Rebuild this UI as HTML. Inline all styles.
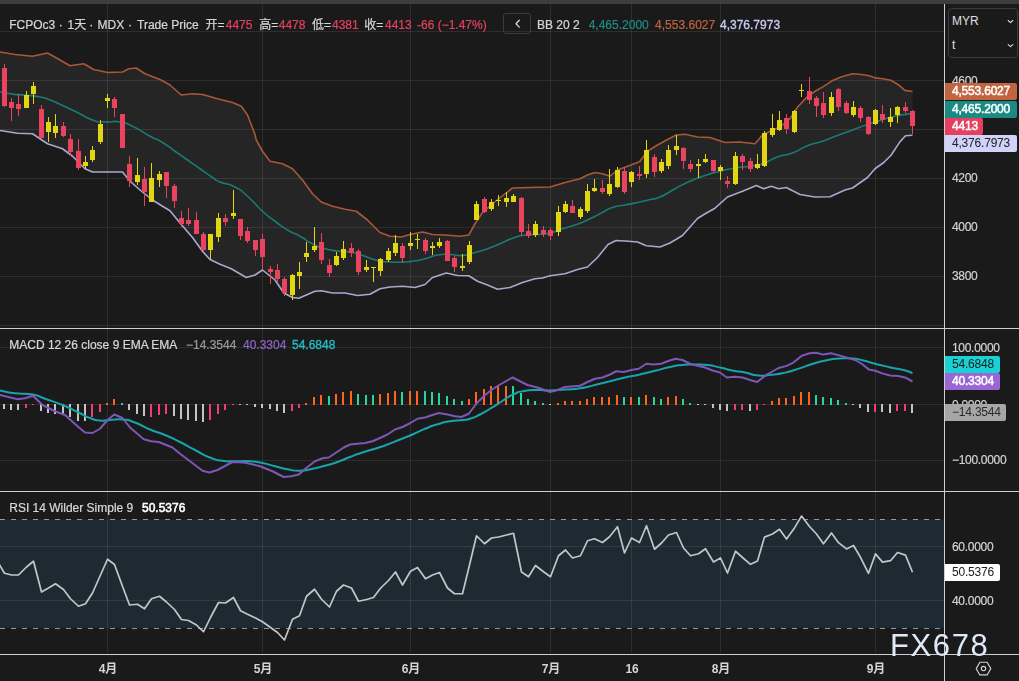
<!DOCTYPE html>
<html lang="zh"><head><meta charset="utf-8"><title>FCPOc3</title>
<style>
html,body{margin:0;padding:0;background:#1a1a1a;}
#root{position:relative;width:1019px;height:681px;overflow:hidden;background:#1a1a1a;font-family:"Liberation Sans","Noto Sans CJK SC",sans-serif;font-size:12px;line-height:14px;color:#d2d2d2;}
.t{position:absolute;white-space:nowrap;}
.leg{will-change:transform;-webkit-text-stroke:0.22px currentColor;color:#d6d6d6}
.leg span{position:absolute;top:0;white-space:nowrap;}
.red{color:#e5405e}
.ax{position:absolute;left:952px;letter-spacing:-0.3px;color:#d2d2d2;white-space:nowrap;will-change:transform;-webkit-text-stroke:0.2px currentColor;}
.box{position:absolute;left:945px;height:17px;line-height:17px;box-sizing:border-box;padding-left:7px;letter-spacing:-0.2px;white-space:nowrap;border-radius:0 2px 2px 0;will-change:transform;}
.tm{position:absolute;top:661.5px;will-change:transform;letter-spacing:-0.2px;width:40px;margin-left:-20px;text-align:center;font-weight:bold;color:#d6d6d6;white-space:nowrap;}
.sb{-webkit-text-stroke:0.35px currentColor;}
</style></head><body><div id="root">
<svg width="1019" height="681" viewBox="0 0 1019 681" style="position:absolute;left:0;top:0">
<rect x="0" y="0" width="1019" height="681" fill="#1a1a1a"/>
<rect x="0" y="0" width="1019" height="4" fill="#3d3d3d"/>
<polygon points="-3.00,51.50 0.00,52.00 15.00,54.50 32.50,56.25 47.50,53.00 60.00,60.00 70.00,65.75 83.75,63.75 93.75,69.50 107.50,72.50 122.50,72.00 128.75,68.75 136.25,68.00 145.00,73.75 160.00,79.50 170.00,85.00 181.25,95.00 192.50,93.75 202.50,94.50 217.50,98.75 232.50,102.50 241.25,106.25 247.50,115.00 254.75,133.75 256.25,140.00 262.50,151.25 270.00,161.25 282.50,163.75 292.50,168.75 302.50,180.00 312.50,193.75 321.25,202.00 332.50,206.25 345.00,209.25 356.25,211.25 367.50,220.00 380.00,232.50 390.00,236.25 401.25,237.00 410.00,234.50 422.50,232.00 432.50,234.50 445.00,235.00 460.00,236.25 468.75,235.00 475.00,223.75 482.50,212.50 492.50,203.75 505.00,193.75 512.50,188.00 530.00,187.50 550.00,187.00 565.00,182.50 580.00,178.75 587.50,175.00 595.00,172.50 602.50,173.75 610.00,176.25 617.50,170.00 627.50,166.25 637.50,162.50 640.00,161.25 647.50,151.25 657.50,145.00 667.50,139.50 676.25,135.00 685.00,134.25 697.50,137.00 710.00,137.50 725.00,142.50 740.00,142.00 755.00,143.75 762.50,135.00 770.00,131.25 780.00,127.00 790.00,118.75 797.70,107.00 806.60,97.40 815.50,91.00 823.20,86.60 832.10,80.80 841.00,77.00 852.50,73.80 861.40,74.50 869.10,75.70 875.50,77.90 883.10,78.70 890.80,80.20 898.40,84.70 904.80,90.40 912.50,91.50 912.50,135.20 905.50,135.80 899.90,141.90 891.25,155.00 883.75,162.50 875.00,168.75 867.50,177.50 852.50,188.00 845.00,190.00 830.00,196.75 815.00,197.00 800.00,194.50 786.25,187.50 778.75,188.75 771.25,186.25 763.75,188.75 756.25,185.50 742.50,191.25 727.50,197.00 715.00,208.20 706.00,213.30 697.50,218.50 690.00,227.00 682.50,235.50 670.00,243.00 660.00,247.00 646.25,245.75 637.50,242.00 625.00,241.00 616.00,240.50 608.00,244.50 597.50,257.50 587.50,267.00 577.50,269.50 565.00,273.75 550.00,275.75 542.50,278.00 535.00,278.75 522.50,282.50 510.00,287.50 497.50,289.25 487.50,285.00 477.50,281.25 468.75,275.75 457.50,275.50 446.25,273.00 432.50,277.50 425.00,284.50 415.00,287.50 402.50,286.25 390.00,287.00 380.00,288.75 370.00,294.25 357.50,295.50 345.00,293.00 332.50,293.00 321.25,290.75 315.00,291.25 307.50,294.50 298.75,298.25 292.50,297.50 283.75,293.00 275.00,280.00 262.50,270.00 255.00,275.00 246.25,277.50 231.25,268.75 220.00,264.25 210.00,259.50 202.50,251.25 192.50,237.50 180.00,223.00 170.00,210.75 162.50,206.25 152.50,200.00 140.00,190.00 130.00,181.25 122.50,172.00 107.50,172.00 92.50,172.00 85.00,168.75 72.50,156.25 62.50,148.75 47.50,143.75 32.50,133.75 17.50,133.25 0.00,130.50 -3.00,130.00" fill="#252525"/>
<rect x="0" y="519.5" width="944" height="108.5" fill="#1d2a31"/>
<g stroke="#ffffff" stroke-opacity="0.09" stroke-width="1" shape-rendering="crispEdges">
<line x1="107.5" y1="4" x2="107.5" y2="653"/>
<line x1="262.5" y1="4" x2="262.5" y2="653"/>
<line x1="410.5" y1="4" x2="410.5" y2="653"/>
<line x1="550.5" y1="4" x2="550.5" y2="653"/>
<line x1="631.5" y1="4" x2="631.5" y2="653"/>
<line x1="720.5" y1="4" x2="720.5" y2="653"/>
<line x1="875.5" y1="4" x2="875.5" y2="653"/>
<line x1="0" y1="31.5" x2="944" y2="31.5"/>
<line x1="0" y1="80.5" x2="944" y2="80.5"/>
<line x1="0" y1="129.5" x2="944" y2="129.5"/>
<line x1="0" y1="178.5" x2="944" y2="178.5"/>
<line x1="0" y1="227.5" x2="944" y2="227.5"/>
<line x1="0" y1="276.5" x2="944" y2="276.5"/>
<line x1="0" y1="325.5" x2="944" y2="325.5"/>
<line x1="0" y1="347.5" x2="944" y2="347.5"/>
<line x1="0" y1="404.5" x2="944" y2="404.5"/>
<line x1="0" y1="460.5" x2="944" y2="460.5"/>
<line x1="0" y1="546.5" x2="944" y2="546.5"/>
<line x1="0" y1="600.5" x2="944" y2="600.5"/>
</g>
<polyline points="-3.00,51.50 0.00,52.00 15.00,54.50 32.50,56.25 47.50,53.00 60.00,60.00 70.00,65.75 83.75,63.75 93.75,69.50 107.50,72.50 122.50,72.00 128.75,68.75 136.25,68.00 145.00,73.75 160.00,79.50 170.00,85.00 181.25,95.00 192.50,93.75 202.50,94.50 217.50,98.75 232.50,102.50 241.25,106.25 247.50,115.00 254.75,133.75 256.25,140.00 262.50,151.25 270.00,161.25 282.50,163.75 292.50,168.75 302.50,180.00 312.50,193.75 321.25,202.00 332.50,206.25 345.00,209.25 356.25,211.25 367.50,220.00 380.00,232.50 390.00,236.25 401.25,237.00 410.00,234.50 422.50,232.00 432.50,234.50 445.00,235.00 460.00,236.25 468.75,235.00 475.00,223.75 482.50,212.50 492.50,203.75 505.00,193.75 512.50,188.00 530.00,187.50 550.00,187.00 565.00,182.50 580.00,178.75 587.50,175.00 595.00,172.50 602.50,173.75 610.00,176.25 617.50,170.00 627.50,166.25 637.50,162.50 640.00,161.25 647.50,151.25 657.50,145.00 667.50,139.50 676.25,135.00 685.00,134.25 697.50,137.00 710.00,137.50 725.00,142.50 740.00,142.00 755.00,143.75 762.50,135.00 770.00,131.25 780.00,127.00 790.00,118.75 797.70,107.00 806.60,97.40 815.50,91.00 823.20,86.60 832.10,80.80 841.00,77.00 852.50,73.80 861.40,74.50 869.10,75.70 875.50,77.90 883.10,78.70 890.80,80.20 898.40,84.70 904.80,90.40 912.50,91.50" fill="none" stroke="#a85839" stroke-width="1.6" stroke-linejoin="round"/>
<polyline points="-3.00,130.00 0.00,130.50 17.50,133.25 32.50,133.75 47.50,143.75 62.50,148.75 72.50,156.25 85.00,168.75 92.50,172.00 107.50,172.00 122.50,172.00 130.00,181.25 140.00,190.00 152.50,200.00 162.50,206.25 170.00,210.75 180.00,223.00 192.50,237.50 202.50,251.25 210.00,259.50 220.00,264.25 231.25,268.75 246.25,277.50 255.00,275.00 262.50,270.00 275.00,280.00 283.75,293.00 292.50,297.50 298.75,298.25 307.50,294.50 315.00,291.25 321.25,290.75 332.50,293.00 345.00,293.00 357.50,295.50 370.00,294.25 380.00,288.75 390.00,287.00 402.50,286.25 415.00,287.50 425.00,284.50 432.50,277.50 446.25,273.00 457.50,275.50 468.75,275.75 477.50,281.25 487.50,285.00 497.50,289.25 510.00,287.50 522.50,282.50 535.00,278.75 542.50,278.00 550.00,275.75 565.00,273.75 577.50,269.50 587.50,267.00 597.50,257.50 608.00,244.50 616.00,240.50 625.00,241.00 637.50,242.00 646.25,245.75 660.00,247.00 670.00,243.00 682.50,235.50 690.00,227.00 697.50,218.50 706.00,213.30 715.00,208.20 727.50,197.00 742.50,191.25 756.25,185.50 763.75,188.75 771.25,186.25 778.75,188.75 786.25,187.50 800.00,194.50 815.00,197.00 830.00,196.75 845.00,190.00 852.50,188.00 867.50,177.50 875.00,168.75 883.75,162.50 891.25,155.00 899.90,141.90 905.50,135.80 912.50,135.20" fill="none" stroke="#a8a9cd" stroke-width="1.6" stroke-linejoin="round"/>
<path d="M-3.00,91.30 C-2.00,91.43 -5.17,90.77 0.00,91.70 C5.17,92.63 4.17,92.97 12.50,94.10 C20.83,95.23 15.83,94.13 25.00,95.10 C34.17,96.07 31.67,95.37 40.00,97.00 C48.33,98.63 42.50,97.17 50.00,100.00 C57.50,102.83 54.17,101.75 62.50,105.50 C70.83,109.25 65.00,106.42 75.00,111.25 C85.00,116.08 82.50,116.42 92.50,120.00 C102.50,123.58 95.83,121.33 105.00,122.00 C114.17,122.67 110.00,120.17 120.00,122.00 C130.00,123.83 125.00,122.75 135.00,127.50 C145.00,132.25 140.83,131.25 150.00,136.25 C159.17,141.25 154.17,137.50 162.50,142.50 C170.83,147.50 166.67,145.42 175.00,151.25 C183.33,157.08 179.17,154.17 187.50,160.00 C195.83,165.83 191.67,162.92 200.00,168.75 C208.33,174.58 205.83,173.08 212.50,177.50 C219.17,181.92 212.50,178.83 220.00,182.00 C227.50,185.17 225.83,182.25 235.00,187.00 C244.17,191.75 238.33,188.17 247.50,196.25 C256.67,204.33 253.33,202.92 262.50,211.25 C271.67,219.58 266.67,215.00 275.00,221.25 C283.33,227.50 279.17,225.00 287.50,230.00 C295.83,235.00 291.67,231.67 300.00,236.25 C308.33,240.83 304.17,239.58 312.50,243.75 C320.83,247.92 315.83,246.25 325.00,248.75 C334.17,251.25 330.83,250.00 340.00,251.25 C349.17,252.50 344.17,250.83 352.50,252.50 C360.83,254.17 356.67,253.58 365.00,256.25 C373.33,258.92 369.17,258.58 377.50,260.50 C385.83,262.42 381.67,261.50 390.00,262.00 C398.33,262.50 395.00,262.25 402.50,262.00 C410.00,261.75 405.00,262.33 412.50,261.25 C420.00,260.17 416.67,260.83 425.00,258.75 C433.33,256.67 429.17,256.42 437.50,255.00 C445.83,253.58 441.67,254.33 450.00,254.50 C458.33,254.67 454.17,256.17 462.50,255.50 C470.83,254.83 466.67,254.75 475.00,252.50 C483.33,250.25 479.17,251.67 487.50,248.75 C495.83,245.83 491.67,247.25 500.00,243.75 C508.33,240.25 504.17,241.17 512.50,238.25 C520.83,235.33 516.67,236.25 525.00,235.00 C533.33,233.75 529.17,235.17 537.50,234.50 C545.83,233.83 541.67,234.92 550.00,233.00 C558.33,231.08 554.17,231.42 562.50,228.75 C570.83,226.08 566.67,227.92 575.00,225.00 C583.33,222.08 579.17,223.75 587.50,220.00 C595.83,216.25 591.67,217.92 600.00,213.75 C608.33,209.58 604.17,210.42 612.50,207.50 C620.83,204.58 616.67,206.67 625.00,205.00 C633.33,203.33 629.17,204.33 637.50,202.50 C645.83,200.67 642.50,201.33 650.00,199.50 C657.50,197.67 651.67,200.58 660.00,197.00 C668.33,193.42 665.00,194.00 675.00,188.75 C685.00,183.50 680.00,185.67 690.00,181.25 C700.00,176.83 695.00,178.83 705.00,175.50 C715.00,172.17 710.00,173.75 720.00,171.25 C730.00,168.75 725.00,169.67 735.00,168.00 C745.00,166.33 740.83,167.67 750.00,166.25 C759.17,164.83 753.33,166.83 762.50,163.75 C771.67,160.67 767.50,160.58 777.50,157.00 C787.50,153.42 782.50,156.75 792.50,153.00 C802.50,149.25 797.50,149.67 807.50,145.75 C817.50,141.83 812.50,144.67 822.50,141.25 C832.50,137.83 827.50,139.25 837.50,135.50 C847.50,131.75 842.50,133.67 852.50,130.00 C862.50,126.33 858.33,127.67 867.50,124.50 C876.67,121.33 870.92,123.25 880.00,120.50 C889.08,117.75 883.92,118.58 894.75,116.25 C905.58,113.92 906.58,114.42 912.50,113.50" fill="none" stroke="#1b7a75" stroke-width="1.6" stroke-linejoin="round"/>
<g shape-rendering="crispEdges">
<rect x="4" y="64" width="1" height="43" fill="#ea4360"/>
<rect x="2" y="68" width="5" height="38" fill="#ea4360"/>
<rect x="11" y="98" width="1" height="23" fill="#ea4360"/>
<rect x="9" y="102" width="5" height="6" fill="#ea4360"/>
<rect x="18" y="94" width="1" height="22" fill="#ea4360"/>
<rect x="16" y="104" width="5" height="5" fill="#ea4360"/>
<rect x="26" y="91" width="1" height="17" fill="#e2d512"/>
<rect x="24" y="95" width="5" height="13" fill="#e2d512"/>
<rect x="33" y="82" width="1" height="22" fill="#e2d512"/>
<rect x="31" y="86" width="5" height="8" fill="#e2d512"/>
<rect x="41" y="105" width="1" height="33" fill="#ea4360"/>
<rect x="39" y="109" width="5" height="29" fill="#ea4360"/>
<rect x="48" y="117" width="1" height="25" fill="#e2d512"/>
<rect x="46" y="122" width="5" height="10" fill="#e2d512"/>
<rect x="55" y="114" width="1" height="24" fill="#e2d512"/>
<rect x="53" y="126" width="5" height="7" fill="#e2d512"/>
<rect x="63" y="122" width="1" height="15" fill="#ea4360"/>
<rect x="61" y="126" width="5" height="10" fill="#ea4360"/>
<rect x="70" y="134" width="1" height="22" fill="#ea4360"/>
<rect x="68" y="139" width="5" height="13" fill="#ea4360"/>
<rect x="78" y="139" width="1" height="31" fill="#ea4360"/>
<rect x="76" y="151" width="5" height="17" fill="#ea4360"/>
<rect x="85" y="156" width="1" height="13" fill="#e2d512"/>
<rect x="83" y="162" width="5" height="4" fill="#e2d512"/>
<rect x="92" y="146" width="1" height="16" fill="#e2d512"/>
<rect x="90" y="150" width="5" height="10" fill="#e2d512"/>
<rect x="100" y="120" width="1" height="24" fill="#e2d512"/>
<rect x="98" y="124" width="5" height="18" fill="#e2d512"/>
<rect x="107" y="94" width="1" height="14" fill="#e2d512"/>
<rect x="105" y="98" width="5" height="3" fill="#e2d512"/>
<rect x="114" y="97" width="1" height="20" fill="#ea4360"/>
<rect x="112" y="99" width="5" height="9" fill="#ea4360"/>
<rect x="122" y="114" width="1" height="34" fill="#ea4360"/>
<rect x="120" y="114" width="5" height="34" fill="#ea4360"/>
<rect x="129" y="156" width="1" height="31" fill="#ea4360"/>
<rect x="127" y="164" width="5" height="17" fill="#ea4360"/>
<rect x="137" y="158" width="1" height="27" fill="#e2d512"/>
<rect x="135" y="175" width="5" height="7" fill="#e2d512"/>
<rect x="144" y="167" width="1" height="39" fill="#ea4360"/>
<rect x="142" y="179" width="5" height="13" fill="#ea4360"/>
<rect x="151" y="163" width="1" height="39" fill="#e2d512"/>
<rect x="149" y="178" width="5" height="24" fill="#e2d512"/>
<rect x="159" y="171" width="1" height="16" fill="#e2d512"/>
<rect x="157" y="174" width="5" height="6" fill="#e2d512"/>
<rect x="166" y="172" width="1" height="26" fill="#ea4360"/>
<rect x="164" y="172" width="5" height="14" fill="#ea4360"/>
<rect x="174" y="184" width="1" height="24" fill="#ea4360"/>
<rect x="172" y="186" width="5" height="15" fill="#ea4360"/>
<rect x="181" y="211" width="1" height="16" fill="#ea4360"/>
<rect x="179" y="218" width="5" height="6" fill="#ea4360"/>
<rect x="188" y="208" width="1" height="18" fill="#ea4360"/>
<rect x="186" y="220" width="5" height="4" fill="#ea4360"/>
<rect x="196" y="212" width="1" height="22" fill="#ea4360"/>
<rect x="194" y="220" width="5" height="14" fill="#ea4360"/>
<rect x="203" y="232" width="1" height="19" fill="#ea4360"/>
<rect x="201" y="234" width="5" height="16" fill="#ea4360"/>
<rect x="210" y="234" width="1" height="25" fill="#e2d512"/>
<rect x="208" y="234" width="5" height="16" fill="#e2d512"/>
<rect x="218" y="213" width="1" height="29" fill="#e2d512"/>
<rect x="216" y="218" width="5" height="19" fill="#e2d512"/>
<rect x="225" y="214" width="1" height="12" fill="#ea4360"/>
<rect x="223" y="218" width="5" height="4" fill="#ea4360"/>
<rect x="233" y="190" width="1" height="29" fill="#e2d512"/>
<rect x="231" y="213" width="5" height="3" fill="#e2d512"/>
<rect x="240" y="219" width="1" height="21" fill="#ea4360"/>
<rect x="238" y="219" width="5" height="17" fill="#ea4360"/>
<rect x="247" y="227" width="1" height="16" fill="#ea4360"/>
<rect x="245" y="231" width="5" height="10" fill="#ea4360"/>
<rect x="255" y="240" width="1" height="16" fill="#ea4360"/>
<rect x="253" y="240" width="5" height="10" fill="#ea4360"/>
<rect x="262" y="234" width="1" height="35" fill="#ea4360"/>
<rect x="260" y="239" width="5" height="18" fill="#ea4360"/>
<rect x="270" y="266" width="1" height="18" fill="#ea4360"/>
<rect x="268" y="269" width="5" height="3" fill="#ea4360"/>
<rect x="277" y="264" width="1" height="18" fill="#ea4360"/>
<rect x="275" y="270" width="5" height="9" fill="#ea4360"/>
<rect x="284" y="277" width="1" height="19" fill="#ea4360"/>
<rect x="282" y="279" width="5" height="14" fill="#ea4360"/>
<rect x="292" y="274" width="1" height="26" fill="#e2d512"/>
<rect x="290" y="275" width="5" height="20" fill="#e2d512"/>
<rect x="299" y="262" width="1" height="27" fill="#e2d512"/>
<rect x="297" y="272" width="5" height="4" fill="#e2d512"/>
<rect x="306" y="242" width="1" height="20" fill="#e2d512"/>
<rect x="304" y="253" width="5" height="4" fill="#e2d512"/>
<rect x="314" y="227" width="1" height="25" fill="#e2d512"/>
<rect x="312" y="246" width="5" height="4" fill="#e2d512"/>
<rect x="321" y="233" width="1" height="31" fill="#ea4360"/>
<rect x="319" y="242" width="5" height="18" fill="#ea4360"/>
<rect x="329" y="259" width="1" height="18" fill="#ea4360"/>
<rect x="327" y="265" width="5" height="8" fill="#ea4360"/>
<rect x="336" y="252" width="1" height="14" fill="#e2d512"/>
<rect x="334" y="256" width="5" height="9" fill="#e2d512"/>
<rect x="343" y="241" width="1" height="19" fill="#e2d512"/>
<rect x="341" y="249" width="5" height="9" fill="#e2d512"/>
<rect x="351" y="243" width="1" height="14" fill="#ea4360"/>
<rect x="349" y="248" width="5" height="5" fill="#ea4360"/>
<rect x="358" y="249" width="1" height="26" fill="#ea4360"/>
<rect x="356" y="251" width="5" height="21" fill="#ea4360"/>
<rect x="366" y="260" width="1" height="12" fill="#e2d512"/>
<rect x="364" y="267" width="5" height="3" fill="#e2d512"/>
<rect x="373" y="267" width="1" height="15" fill="#e2d512"/>
<rect x="371" y="267" width="5" height="1" fill="#e2d512"/>
<rect x="380" y="258" width="1" height="18" fill="#e2d512"/>
<rect x="378" y="259" width="5" height="12" fill="#e2d512"/>
<rect x="388" y="248" width="1" height="14" fill="#e2d512"/>
<rect x="386" y="251" width="5" height="9" fill="#e2d512"/>
<rect x="395" y="235" width="1" height="21" fill="#e2d512"/>
<rect x="393" y="243" width="5" height="10" fill="#e2d512"/>
<rect x="402" y="243" width="1" height="20" fill="#ea4360"/>
<rect x="400" y="246" width="5" height="12" fill="#ea4360"/>
<rect x="410" y="232" width="1" height="18" fill="#e2d512"/>
<rect x="408" y="243" width="5" height="3" fill="#e2d512"/>
<rect x="417" y="234" width="1" height="15" fill="#e2d512"/>
<rect x="415" y="239" width="5" height="1" fill="#e2d512"/>
<rect x="425" y="238" width="1" height="16" fill="#ea4360"/>
<rect x="423" y="240" width="5" height="11" fill="#ea4360"/>
<rect x="432" y="242" width="1" height="13" fill="#e2d512"/>
<rect x="430" y="246" width="5" height="2" fill="#e2d512"/>
<rect x="439" y="238" width="1" height="10" fill="#e2d512"/>
<rect x="437" y="242" width="5" height="4" fill="#e2d512"/>
<rect x="447" y="240" width="1" height="21" fill="#ea4360"/>
<rect x="445" y="241" width="5" height="20" fill="#ea4360"/>
<rect x="454" y="256" width="1" height="16" fill="#ea4360"/>
<rect x="452" y="258" width="5" height="9" fill="#ea4360"/>
<rect x="462" y="254" width="1" height="17" fill="#e2d512"/>
<rect x="460" y="266" width="5" height="2" fill="#e2d512"/>
<rect x="469" y="241" width="1" height="23" fill="#e2d512"/>
<rect x="467" y="245" width="5" height="17" fill="#e2d512"/>
<rect x="476" y="201" width="1" height="19" fill="#e2d512"/>
<rect x="474" y="204" width="5" height="16" fill="#e2d512"/>
<rect x="484" y="197" width="1" height="16" fill="#ea4360"/>
<rect x="482" y="199" width="5" height="13" fill="#ea4360"/>
<rect x="491" y="199" width="1" height="12" fill="#e2d512"/>
<rect x="489" y="202" width="5" height="7" fill="#e2d512"/>
<rect x="498" y="195" width="1" height="11" fill="#e2d512"/>
<rect x="496" y="200" width="5" height="1" fill="#e2d512"/>
<rect x="506" y="192" width="1" height="15" fill="#e2d512"/>
<rect x="504" y="198" width="5" height="4" fill="#e2d512"/>
<rect x="513" y="194" width="1" height="8" fill="#e2d512"/>
<rect x="511" y="196" width="5" height="6" fill="#e2d512"/>
<rect x="521" y="197" width="1" height="39" fill="#ea4360"/>
<rect x="519" y="198" width="5" height="34" fill="#ea4360"/>
<rect x="528" y="224" width="1" height="14" fill="#ea4360"/>
<rect x="526" y="231" width="5" height="5" fill="#ea4360"/>
<rect x="535" y="221" width="1" height="16" fill="#e2d512"/>
<rect x="533" y="224" width="5" height="11" fill="#e2d512"/>
<rect x="543" y="226" width="1" height="11" fill="#ea4360"/>
<rect x="541" y="230" width="5" height="4" fill="#ea4360"/>
<rect x="550" y="228" width="1" height="12" fill="#ea4360"/>
<rect x="548" y="230" width="5" height="6" fill="#ea4360"/>
<rect x="558" y="206" width="1" height="30" fill="#e2d512"/>
<rect x="556" y="212" width="5" height="20" fill="#e2d512"/>
<rect x="565" y="201" width="1" height="12" fill="#e2d512"/>
<rect x="563" y="204" width="5" height="8" fill="#e2d512"/>
<rect x="572" y="200" width="1" height="13" fill="#ea4360"/>
<rect x="570" y="206" width="5" height="7" fill="#ea4360"/>
<rect x="580" y="207" width="1" height="12" fill="#e2d512"/>
<rect x="578" y="209" width="5" height="8" fill="#e2d512"/>
<rect x="587" y="184" width="1" height="29" fill="#e2d512"/>
<rect x="585" y="191" width="5" height="20" fill="#e2d512"/>
<rect x="594" y="179" width="1" height="13" fill="#e2d512"/>
<rect x="592" y="188" width="5" height="3" fill="#e2d512"/>
<rect x="602" y="180" width="1" height="14" fill="#ea4360"/>
<rect x="600" y="188" width="5" height="4" fill="#ea4360"/>
<rect x="609" y="169" width="1" height="27" fill="#e2d512"/>
<rect x="607" y="184" width="5" height="10" fill="#e2d512"/>
<rect x="617" y="167" width="1" height="21" fill="#e2d512"/>
<rect x="615" y="170" width="5" height="17" fill="#e2d512"/>
<rect x="624" y="168" width="1" height="26" fill="#ea4360"/>
<rect x="622" y="171" width="5" height="21" fill="#ea4360"/>
<rect x="631" y="171" width="1" height="16" fill="#e2d512"/>
<rect x="629" y="172" width="5" height="10" fill="#e2d512"/>
<rect x="639" y="166" width="1" height="14" fill="#ea4360"/>
<rect x="637" y="174" width="5" height="2" fill="#ea4360"/>
<rect x="646" y="140" width="1" height="38" fill="#e2d512"/>
<rect x="644" y="150" width="5" height="24" fill="#e2d512"/>
<rect x="654" y="154" width="1" height="23" fill="#ea4360"/>
<rect x="652" y="157" width="5" height="15" fill="#ea4360"/>
<rect x="661" y="159" width="1" height="14" fill="#e2d512"/>
<rect x="659" y="162" width="5" height="9" fill="#e2d512"/>
<rect x="668" y="145" width="1" height="24" fill="#e2d512"/>
<rect x="666" y="150" width="5" height="16" fill="#e2d512"/>
<rect x="676" y="135" width="1" height="20" fill="#e2d512"/>
<rect x="674" y="146" width="5" height="4" fill="#e2d512"/>
<rect x="683" y="147" width="1" height="22" fill="#ea4360"/>
<rect x="681" y="148" width="5" height="13" fill="#ea4360"/>
<rect x="690" y="160" width="1" height="12" fill="#ea4360"/>
<rect x="688" y="164" width="5" height="5" fill="#ea4360"/>
<rect x="698" y="159" width="1" height="19" fill="#e2d512"/>
<rect x="696" y="164" width="5" height="2" fill="#e2d512"/>
<rect x="705" y="154" width="1" height="9" fill="#e2d512"/>
<rect x="703" y="159" width="5" height="3" fill="#e2d512"/>
<rect x="713" y="160" width="1" height="12" fill="#ea4360"/>
<rect x="711" y="160" width="5" height="11" fill="#ea4360"/>
<rect x="720" y="165" width="1" height="15" fill="#e2d512"/>
<rect x="718" y="167" width="5" height="4" fill="#e2d512"/>
<rect x="727" y="176" width="1" height="12" fill="#ea4360"/>
<rect x="725" y="181" width="5" height="3" fill="#ea4360"/>
<rect x="735" y="152" width="1" height="33" fill="#e2d512"/>
<rect x="733" y="156" width="5" height="28" fill="#e2d512"/>
<rect x="742" y="154" width="1" height="16" fill="#ea4360"/>
<rect x="740" y="156" width="5" height="6" fill="#ea4360"/>
<rect x="750" y="158" width="1" height="14" fill="#ea4360"/>
<rect x="748" y="161" width="5" height="8" fill="#ea4360"/>
<rect x="757" y="154" width="1" height="15" fill="#e2d512"/>
<rect x="755" y="164" width="5" height="4" fill="#e2d512"/>
<rect x="764" y="131" width="1" height="36" fill="#e2d512"/>
<rect x="762" y="133" width="5" height="33" fill="#e2d512"/>
<rect x="772" y="114" width="1" height="23" fill="#e2d512"/>
<rect x="770" y="128" width="5" height="7" fill="#e2d512"/>
<rect x="779" y="111" width="1" height="20" fill="#e2d512"/>
<rect x="777" y="120" width="5" height="10" fill="#e2d512"/>
<rect x="786" y="114" width="1" height="20" fill="#ea4360"/>
<rect x="784" y="118" width="5" height="11" fill="#ea4360"/>
<rect x="794" y="110" width="1" height="23" fill="#e2d512"/>
<rect x="792" y="111" width="5" height="21" fill="#e2d512"/>
<rect x="801" y="84" width="1" height="13" fill="#e2d512"/>
<rect x="799" y="90" width="5" height="1" fill="#e2d512"/>
<rect x="809" y="77" width="1" height="27" fill="#ea4360"/>
<rect x="807" y="91" width="5" height="9" fill="#ea4360"/>
<rect x="816" y="96" width="1" height="21" fill="#ea4360"/>
<rect x="814" y="98" width="5" height="8" fill="#ea4360"/>
<rect x="823" y="92" width="1" height="26" fill="#ea4360"/>
<rect x="821" y="103" width="5" height="12" fill="#ea4360"/>
<rect x="831" y="92" width="1" height="24" fill="#e2d512"/>
<rect x="829" y="97" width="5" height="16" fill="#e2d512"/>
<rect x="838" y="88" width="1" height="23" fill="#ea4360"/>
<rect x="836" y="89" width="5" height="18" fill="#ea4360"/>
<rect x="846" y="101" width="1" height="13" fill="#ea4360"/>
<rect x="844" y="103" width="5" height="10" fill="#ea4360"/>
<rect x="853" y="101" width="1" height="16" fill="#e2d512"/>
<rect x="851" y="107" width="5" height="8" fill="#e2d512"/>
<rect x="860" y="106" width="1" height="16" fill="#ea4360"/>
<rect x="858" y="108" width="5" height="10" fill="#ea4360"/>
<rect x="868" y="116" width="1" height="19" fill="#ea4360"/>
<rect x="866" y="117" width="5" height="17" fill="#ea4360"/>
<rect x="875" y="109" width="1" height="16" fill="#e2d512"/>
<rect x="873" y="110" width="5" height="14" fill="#e2d512"/>
<rect x="882" y="105" width="1" height="18" fill="#ea4360"/>
<rect x="880" y="114" width="5" height="6" fill="#ea4360"/>
<rect x="890" y="108" width="1" height="19" fill="#e2d512"/>
<rect x="888" y="117" width="5" height="5" fill="#e2d512"/>
<rect x="897" y="106" width="1" height="17" fill="#e2d512"/>
<rect x="895" y="107" width="5" height="8" fill="#e2d512"/>
<rect x="905" y="102" width="1" height="11" fill="#ea4360"/>
<rect x="903" y="107" width="5" height="4" fill="#ea4360"/>
<rect x="912" y="110" width="1" height="24" fill="#ea4360"/>
<rect x="910" y="111" width="5" height="15" fill="#ea4360"/>
</g>
<g shape-rendering="crispEdges">
<rect x="3" y="404" width="2" height="5" fill="#c4c4c4"/>
<rect x="10" y="404" width="2" height="6" fill="#c4c4c4"/>
<rect x="17" y="404" width="2" height="6" fill="#c4c4c4"/>
<rect x="25" y="404" width="2" height="4" fill="#f23d74"/>
<rect x="32" y="404" width="2" height="1" fill="#f23d74"/>
<rect x="40" y="404" width="2" height="7" fill="#c4c4c4"/>
<rect x="47" y="404" width="2" height="9" fill="#c4c4c4"/>
<rect x="54" y="404" width="2" height="10" fill="#c4c4c4"/>
<rect x="62" y="404" width="2" height="11" fill="#c4c4c4"/>
<rect x="69" y="404" width="2" height="13" fill="#c4c4c4"/>
<rect x="77" y="404" width="2" height="17" fill="#c4c4c4"/>
<rect x="84" y="404" width="2" height="17" fill="#c4c4c4"/>
<rect x="91" y="404" width="2" height="13" fill="#f23d74"/>
<rect x="99" y="404" width="2" height="8" fill="#f23d74"/>
<rect x="106" y="403" width="2" height="2" fill="#ff6418"/>
<rect x="113" y="399" width="2" height="6" fill="#ff6418"/>
<rect x="121" y="403" width="2" height="2" fill="#27d69b"/>
<rect x="128" y="404" width="2" height="6" fill="#c4c4c4"/>
<rect x="136" y="404" width="2" height="10" fill="#c4c4c4"/>
<rect x="143" y="404" width="2" height="12" fill="#c4c4c4"/>
<rect x="150" y="404" width="2" height="13" fill="#f23d74"/>
<rect x="158" y="404" width="2" height="11" fill="#f23d74"/>
<rect x="165" y="404" width="2" height="10" fill="#f23d74"/>
<rect x="173" y="404" width="2" height="12" fill="#c4c4c4"/>
<rect x="180" y="404" width="2" height="15" fill="#c4c4c4"/>
<rect x="187" y="404" width="2" height="16" fill="#c4c4c4"/>
<rect x="195" y="404" width="2" height="17" fill="#c4c4c4"/>
<rect x="202" y="404" width="2" height="18" fill="#c4c4c4"/>
<rect x="209" y="404" width="2" height="16" fill="#f23d74"/>
<rect x="217" y="404" width="2" height="10" fill="#f23d74"/>
<rect x="224" y="404" width="2" height="6" fill="#f23d74"/>
<rect x="232" y="404" width="2" height="1" fill="#f23d74"/>
<rect x="239" y="404" width="2" height="1" fill="#c4c4c4"/>
<rect x="246" y="404" width="2" height="1" fill="#c4c4c4"/>
<rect x="254" y="404" width="2" height="3" fill="#c4c4c4"/>
<rect x="261" y="404" width="2" height="4" fill="#c4c4c4"/>
<rect x="269" y="404" width="2" height="5" fill="#c4c4c4"/>
<rect x="276" y="404" width="2" height="7" fill="#c4c4c4"/>
<rect x="283" y="404" width="2" height="9" fill="#c4c4c4"/>
<rect x="291" y="404" width="2" height="7" fill="#f23d74"/>
<rect x="298" y="404" width="2" height="4" fill="#f23d74"/>
<rect x="305" y="403" width="2" height="2" fill="#ff6418"/>
<rect x="313" y="397" width="2" height="8" fill="#ff6418"/>
<rect x="320" y="395" width="2" height="10" fill="#ff6418"/>
<rect x="328" y="396" width="2" height="9" fill="#27d69b"/>
<rect x="335" y="394" width="2" height="11" fill="#ff6418"/>
<rect x="342" y="392" width="2" height="13" fill="#ff6418"/>
<rect x="350" y="391" width="2" height="14" fill="#ff6418"/>
<rect x="357" y="394" width="2" height="11" fill="#27d69b"/>
<rect x="365" y="395" width="2" height="10" fill="#27d69b"/>
<rect x="372" y="395" width="2" height="10" fill="#27d69b"/>
<rect x="379" y="394" width="2" height="11" fill="#ff6418"/>
<rect x="387" y="393" width="2" height="12" fill="#ff6418"/>
<rect x="394" y="391" width="2" height="14" fill="#ff6418"/>
<rect x="401" y="392" width="2" height="13" fill="#27d69b"/>
<rect x="409" y="391" width="2" height="14" fill="#ff6418"/>
<rect x="416" y="391" width="2" height="14" fill="#ff6418"/>
<rect x="424" y="391" width="2" height="14" fill="#27d69b"/>
<rect x="431" y="392" width="2" height="13" fill="#27d69b"/>
<rect x="438" y="393" width="2" height="12" fill="#27d69b"/>
<rect x="446" y="396" width="2" height="9" fill="#27d69b"/>
<rect x="453" y="399" width="2" height="6" fill="#27d69b"/>
<rect x="461" y="401" width="2" height="4" fill="#27d69b"/>
<rect x="468" y="399" width="2" height="6" fill="#ff6418"/>
<rect x="475" y="392" width="2" height="13" fill="#ff6418"/>
<rect x="483" y="389" width="2" height="16" fill="#ff6418"/>
<rect x="490" y="386" width="2" height="19" fill="#ff6418"/>
<rect x="497" y="386" width="2" height="19" fill="#ff6418"/>
<rect x="505" y="386" width="2" height="19" fill="#ff6418"/>
<rect x="512" y="386" width="2" height="19" fill="#27d69b"/>
<rect x="520" y="393" width="2" height="12" fill="#27d69b"/>
<rect x="527" y="399" width="2" height="6" fill="#27d69b"/>
<rect x="534" y="401" width="2" height="4" fill="#27d69b"/>
<rect x="542" y="403" width="2" height="2" fill="#27d69b"/>
<rect x="549" y="404" width="2" height="1" fill="#c4c4c4"/>
<rect x="557" y="403" width="2" height="2" fill="#ff6418"/>
<rect x="564" y="401" width="2" height="4" fill="#ff6418"/>
<rect x="571" y="401" width="2" height="4" fill="#ff6418"/>
<rect x="579" y="401" width="2" height="4" fill="#ff6418"/>
<rect x="586" y="399" width="2" height="6" fill="#ff6418"/>
<rect x="593" y="397" width="2" height="8" fill="#ff6418"/>
<rect x="601" y="397" width="2" height="8" fill="#ff6418"/>
<rect x="608" y="397" width="2" height="8" fill="#ff6418"/>
<rect x="616" y="395" width="2" height="10" fill="#ff6418"/>
<rect x="623" y="397" width="2" height="8" fill="#27d69b"/>
<rect x="630" y="397" width="2" height="8" fill="#ff6418"/>
<rect x="638" y="397" width="2" height="8" fill="#27d69b"/>
<rect x="645" y="395" width="2" height="10" fill="#ff6418"/>
<rect x="653" y="397" width="2" height="8" fill="#27d69b"/>
<rect x="660" y="399" width="2" height="6" fill="#27d69b"/>
<rect x="667" y="397" width="2" height="8" fill="#ff6418"/>
<rect x="675" y="396" width="2" height="9" fill="#ff6418"/>
<rect x="682" y="399" width="2" height="6" fill="#27d69b"/>
<rect x="689" y="403" width="2" height="2" fill="#27d69b"/>
<rect x="697" y="404" width="2" height="1" fill="#c4c4c4"/>
<rect x="704" y="404" width="2" height="1" fill="#c4c4c4"/>
<rect x="712" y="404" width="2" height="4" fill="#c4c4c4"/>
<rect x="719" y="404" width="2" height="6" fill="#c4c4c4"/>
<rect x="726" y="404" width="2" height="7" fill="#c4c4c4"/>
<rect x="734" y="404" width="2" height="6" fill="#f23d74"/>
<rect x="741" y="404" width="2" height="6" fill="#f23d74"/>
<rect x="749" y="404" width="2" height="7" fill="#c4c4c4"/>
<rect x="756" y="404" width="2" height="6" fill="#f23d74"/>
<rect x="763" y="404" width="2" height="1" fill="#f23d74"/>
<rect x="771" y="401" width="2" height="4" fill="#ff6418"/>
<rect x="778" y="398" width="2" height="7" fill="#ff6418"/>
<rect x="785" y="398" width="2" height="7" fill="#ff6418"/>
<rect x="793" y="396" width="2" height="9" fill="#ff6418"/>
<rect x="800" y="392" width="2" height="13" fill="#ff6418"/>
<rect x="808" y="392" width="2" height="13" fill="#ff6418"/>
<rect x="815" y="395" width="2" height="10" fill="#27d69b"/>
<rect x="822" y="397" width="2" height="8" fill="#27d69b"/>
<rect x="830" y="398" width="2" height="7" fill="#27d69b"/>
<rect x="837" y="400" width="2" height="5" fill="#27d69b"/>
<rect x="845" y="403" width="2" height="2" fill="#27d69b"/>
<rect x="852" y="404" width="2" height="1" fill="#c4c4c4"/>
<rect x="859" y="404" width="2" height="4" fill="#c4c4c4"/>
<rect x="867" y="404" width="2" height="8" fill="#c4c4c4"/>
<rect x="874" y="404" width="2" height="8" fill="#f23d74"/>
<rect x="881" y="404" width="2" height="8" fill="#c4c4c4"/>
<rect x="889" y="404" width="2" height="9" fill="#c4c4c4"/>
<rect x="896" y="404" width="2" height="7" fill="#f23d74"/>
<rect x="904" y="404" width="2" height="7" fill="#f23d74"/>
<rect x="911" y="404" width="2" height="9" fill="#c4c4c4"/>
</g>
<path d="M-3.00,390.00 C-2.00,390.17 -6.00,389.42 0.00,390.50 C6.00,391.58 4.17,391.92 15.00,393.25 C25.83,394.58 22.50,392.67 32.50,394.50 C42.50,396.33 35.00,395.25 45.00,398.75 C55.00,402.25 51.67,400.58 62.50,405.00 C73.33,409.42 68.33,407.67 77.50,412.00 C86.67,416.33 82.50,415.17 90.00,418.00 C97.50,420.83 93.33,419.83 100.00,420.50 C106.67,421.17 102.50,420.33 110.00,420.00 C117.50,419.67 114.17,418.67 122.50,419.50 C130.83,420.33 125.83,419.17 135.00,422.50 C144.17,425.83 140.00,425.33 150.00,429.50 C160.00,433.67 155.00,430.83 165.00,435.00 C175.00,439.17 170.00,437.00 180.00,442.00 C190.00,447.00 185.00,444.83 195.00,450.00 C205.00,455.17 200.83,453.92 210.00,457.50 C219.17,461.08 214.17,459.50 222.50,460.75 C230.83,462.00 225.83,461.08 235.00,461.25 C244.17,461.42 240.83,460.67 250.00,461.25 C259.17,461.83 254.17,461.33 262.50,463.00 C270.83,464.67 266.67,464.17 275.00,466.25 C283.33,468.33 279.17,467.75 287.50,469.25 C295.83,470.75 291.67,470.92 300.00,470.75 C308.33,470.58 304.17,470.42 312.50,468.75 C320.83,467.08 316.67,468.00 325.00,465.75 C333.33,463.50 329.17,464.92 337.50,462.00 C345.83,459.08 341.67,460.17 350.00,457.00 C358.33,453.83 354.17,455.25 362.50,452.50 C370.83,449.75 366.67,451.42 375.00,448.75 C383.33,446.08 379.17,447.58 387.50,444.50 C395.83,441.42 391.67,442.83 400.00,439.50 C408.33,436.17 404.17,438.08 412.50,434.50 C420.83,430.92 416.67,432.17 425.00,428.75 C433.33,425.33 429.17,426.75 437.50,424.25 C445.83,421.75 441.67,422.67 450.00,421.25 C458.33,419.83 455.83,420.83 462.50,420.00 C469.17,419.17 464.17,420.58 470.00,418.75 C475.83,416.92 473.33,417.83 480.00,414.50 C486.67,411.17 483.33,412.75 490.00,408.75 C496.67,404.75 494.17,406.25 500.00,402.50 C505.83,398.75 502.50,400.42 507.50,397.50 C512.50,394.58 510.00,395.83 515.00,393.75 C520.00,391.67 515.00,392.50 522.50,391.25 C530.00,390.00 528.33,390.25 537.50,390.00 C546.67,389.75 540.83,390.67 550.00,390.50 C559.17,390.33 555.00,390.25 565.00,389.50 C575.00,388.75 570.00,389.75 580.00,388.25 C590.00,386.75 585.00,387.33 595.00,385.00 C605.00,382.67 600.00,383.75 610.00,381.25 C620.00,378.75 615.00,379.75 625.00,377.50 C635.00,375.25 630.00,376.75 640.00,374.50 C650.00,372.25 645.00,373.25 655.00,370.75 C665.00,368.25 660.83,368.92 670.00,367.00 C679.17,365.08 674.17,365.83 682.50,365.00 C690.83,364.17 686.67,364.50 695.00,364.50 C703.33,364.50 699.17,364.00 707.50,365.00 C715.83,366.00 711.67,365.67 720.00,367.50 C728.33,369.33 724.17,368.80 732.50,370.50 C740.83,372.20 736.37,370.93 745.00,372.60 C753.63,374.27 749.43,374.78 758.40,375.50 C767.37,376.22 762.93,375.72 771.90,374.75 C780.87,373.78 776.33,374.65 785.30,372.60 C794.27,370.55 789.83,371.47 798.80,368.60 C807.77,365.73 803.23,366.70 812.20,364.00 C821.17,361.30 816.73,362.30 825.70,360.50 C834.67,358.70 830.13,359.23 839.10,358.60 C848.07,357.97 844.53,357.97 852.60,358.60 C860.67,359.23 856.13,358.87 863.30,360.50 C870.47,362.13 866.93,361.63 874.10,363.50 C881.27,365.37 877.63,364.40 884.80,366.10 C891.97,367.80 888.43,367.07 895.60,368.60 C902.77,370.13 900.67,369.13 906.30,370.70 C911.93,372.27 910.43,372.43 912.50,373.30" fill="none" stroke="#18a3ad" stroke-width="2" stroke-linejoin="round"/>
<polyline points="-3.00,394.50 0.00,395.00 17.50,399.25 25.00,398.25 33.00,395.75 42.50,405.00 55.00,411.25 65.00,415.00 77.50,426.25 85.00,432.50 92.50,433.00 100.00,428.75 107.50,420.00 114.25,414.50 122.50,418.00 130.00,427.50 143.75,439.25 151.25,441.25 158.75,442.00 172.50,447.50 180.00,453.75 195.00,465.00 202.50,470.75 209.50,472.50 217.50,470.00 232.50,462.00 243.75,462.50 250.00,463.75 260.00,466.25 272.50,471.25 283.75,477.00 291.25,476.25 298.75,474.50 306.25,468.00 315.00,461.25 322.50,458.25 328.75,457.50 336.25,452.50 343.75,447.50 350.00,444.50 357.50,443.75 365.00,443.00 372.50,441.25 380.00,438.00 387.50,434.50 395.00,429.50 402.50,427.00 410.00,423.25 417.50,418.75 425.00,417.50 432.50,415.00 438.75,413.00 447.50,414.50 455.00,416.25 461.25,417.00 468.75,413.75 476.25,403.75 483.75,396.25 491.25,390.00 500.00,384.50 512.50,377.50 520.00,381.25 527.50,385.00 537.50,387.50 550.00,392.00 557.50,390.00 565.00,387.00 580.00,385.75 587.50,382.00 595.00,378.75 602.50,377.50 610.00,374.50 616.25,371.25 623.75,372.00 631.25,370.00 638.75,368.75 646.25,363.75 653.75,364.50 661.25,363.75 668.75,360.75 675.75,358.75 682.50,360.00 690.00,363.75 697.50,365.75 705.00,367.50 712.50,370.50 720.00,372.50 726.75,377.50 735.00,376.75 742.50,377.50 750.00,380.00 757.10,382.00 766.50,374.75 778.60,368.00 786.70,365.90 793.40,362.60 801.50,355.90 809.50,353.20 816.30,352.70 823.00,354.60 831.00,353.20 839.10,355.40 847.20,357.80 855.20,360.00 862.00,364.00 868.70,369.40 875.40,370.70 882.10,373.40 890.20,375.50 898.30,376.10 905.00,377.40 912.50,381.50" fill="none" stroke="#7d57b8" stroke-width="2" stroke-linejoin="round"/>
<line x1="-0.4" y1="519.5" x2="944" y2="519.5" stroke="#92989c" stroke-width="1" stroke-dasharray="5,6" shape-rendering="crispEdges"/>
<line x1="-0.4" y1="628.5" x2="944" y2="628.5" stroke="#92989c" stroke-width="1" stroke-dasharray="5,6" shape-rendering="crispEdges"/>
<polyline points="-3.00,560.50 4.50,573.25 11.50,575.00 18.50,575.00 26.50,567.00 33.50,561.25 41.50,592.00 48.50,588.00 55.50,583.75 63.50,589.50 70.50,598.75 78.50,606.25 85.50,603.75 92.50,593.00 100.50,575.00 107.50,559.25 114.50,564.50 122.50,586.25 129.50,605.00 137.50,604.25 144.50,608.75 151.50,598.75 159.50,596.25 166.50,602.00 174.50,609.50 181.50,619.50 188.50,620.50 196.50,625.00 203.50,631.75 210.50,617.50 218.50,602.50 225.50,603.00 233.50,597.50 240.50,610.75 247.50,614.25 255.50,618.00 262.50,621.75 270.50,627.50 277.50,632.50 284.50,640.00 292.50,619.25 299.50,615.75 306.50,596.25 314.50,589.25 321.50,599.25 329.50,607.00 336.50,591.25 343.50,585.00 351.50,588.00 358.50,601.25 366.50,599.50 373.50,597.50 380.50,588.25 388.50,580.50 395.50,572.00 402.50,585.00 410.50,571.25 417.50,567.50 425.50,578.75 432.50,575.00 439.50,572.50 447.50,588.00 454.50,593.75 462.50,593.75 469.50,565.00 476.50,535.75 484.50,543.75 491.50,538.00 498.50,537.00 506.50,535.00 513.50,533.25 521.50,572.00 528.50,576.75 535.50,565.50 543.50,571.75 550.50,576.75 558.50,555.75 565.50,550.00 572.50,558.00 580.50,555.75 587.50,540.75 594.50,538.75 602.50,542.50 609.50,536.75 617.50,526.75 624.50,553.00 631.50,538.00 639.50,542.50 646.50,525.75 654.50,549.25 661.50,543.00 668.50,535.00 676.50,532.50 683.50,548.00 690.50,555.75 698.50,553.75 705.50,548.75 713.50,562.00 720.50,558.00 727.50,573.00 735.50,551.25 742.50,557.50 750.50,564.30 757.50,560.90 764.50,537.10 772.50,534.00 779.50,529.30 786.50,539.10 794.50,527.90 801.50,516.10 809.50,526.50 816.50,534.00 823.50,543.80 831.50,532.90 838.50,542.70 846.50,548.90 853.50,545.50 860.50,557.30 868.50,573.30 875.50,553.90 882.50,562.10 890.50,560.70 897.50,552.50 905.50,555.10 912.50,572.20" fill="none" stroke="#c2c6c9" stroke-width="1.7" stroke-linejoin="round"/>
<g stroke="#cfcfcf" stroke-width="1" shape-rendering="crispEdges">
<line x1="0" y1="328.5" x2="1019" y2="328.5"/>
<line x1="0" y1="491.5" x2="1019" y2="491.5"/>
<line x1="0" y1="654.5" x2="1019" y2="654.5"/>
<line x1="944.5" y1="4" x2="944.5" y2="681"/>
</g>
<g fill="none" stroke="#d8d8d8" stroke-width="1.4" stroke-linecap="round" stroke-linejoin="round">
<polyline points="519.3,20.3 516,23.7 519.3,27.1" stroke-width="1.3"/>
<polyline points="1008.2,20.5 1010.5,22.6 1012.8,20.5" stroke-width="1.15"/>
<polyline points="1008.2,44.6 1010.5,46.7 1012.8,44.6" stroke-width="1.15"/>
</g>
<polygon points="990.80,668.60 987.15,674.92 979.85,674.92 976.20,668.60 979.85,662.28 987.15,662.28" fill="none" stroke="#d4d4d4" stroke-width="1.1" stroke-linejoin="round"/>
<circle cx="983.5" cy="668.6" r="2.2" fill="none" stroke="#d4d4d4" stroke-width="1.1"/>
</svg>
<div class="leg" style="position:absolute;left:0;top:18px;height:14px;">
<span style="left:9.25px;">FCPOc3</span>
<span style="left:58.8px;">·</span>
<span style="left:67.5px;">1天</span>
<span style="left:89.3px;">·</span>
<span style="left:97.5px;">MDX</span>
<span style="left:128px;">·</span>
<span style="left:137px;">Trade Price</span>
<span style="left:205.5px;">开=</span>
<span class="red" style="left:225.75px;">4475</span>
<span style="left:259.25px;">高=</span>
<span class="red" style="left:278.75px;">4478</span>
<span style="left:312px;">低=</span>
<span class="red" style="left:332px;">4381</span>
<span style="left:364.25px;">收=</span>
<span class="red" style="left:385px;">4413</span>
<span class="red" style="left:417px;">-66 (−1.47%)</span>
<span style="left:537px;">BB 20 2</span>
<span style="left:588.7px;color:#1e8c86">4,465.2000</span>
<span style="left:655.1px;color:#c0633f">4,553.6027</span>
<span class="sb" style="left:720px;color:#c9caf0">4,376.7973</span>
</div>
<div style="position:absolute;left:503px;top:13px;width:28px;height:21px;box-sizing:border-box;border:1px solid #3c3c3c;border-radius:3px;"></div>
<div class="leg" style="position:absolute;left:0;top:338px;height:14px;">
<span style="left:9.25px;">MACD 12 26 close 9 EMA EMA</span>
<span style="left:186px;color:#9a9a9a">−14.3544</span>
<span style="left:243px;color:#8c63c9">40.3304</span>
<span class="sb" style="left:292px;color:#22bcc6">54.6848</span>
</div>
<div class="leg" style="position:absolute;left:0;top:501px;height:14px;">
<span style="left:9.25px;">RSI 14 Wilder Simple 9</span>
<span style="left:142px;color:#ffffff;-webkit-text-stroke:0.55px #ffffff">50.5376</span>
</div>
<div style="position:absolute;left:948px;top:8px;width:70px;height:50px;box-sizing:border-box;border:1px solid #3c3c3c;border-radius:4px;"></div>
<div class="t" style="left:952px;top:14px;color:#e0e0e0">MYR</div>
<div class="t" style="left:952px;top:38px;color:#e0e0e0">t</div>
<div class="ax" style="top:74px">4600</div>
<div class="ax" style="top:171px">4200</div>
<div class="ax" style="top:220px">4000</div>
<div class="ax" style="top:269px">3800</div>
<div class="ax" style="top:341px">100.0000</div>
<div class="ax" style="top:398px">0.0000</div>
<div class="ax" style="top:453px">−100.0000</div>
<div class="ax" style="top:540px">60.0000</div>
<div class="ax" style="top:594px">40.0000</div>
<div class="box" style="top:83px;width:72px;background:#c2643f;color:#ffffff;-webkit-text-stroke:0.5px currentColor;">4,553.6027</div>
<div class="box" style="top:101px;width:72px;background:#1a8a84;color:#ffffff;-webkit-text-stroke:0.5px currentColor;">4,465.2000</div>
<div class="box" style="top:118px;width:38px;background:#e5405e;color:#ffffff;-webkit-text-stroke:0.5px currentColor;">4413</div>
<div class="box" style="top:135px;width:72px;background:#d2d2fb;color:#202020;">4,376.7973</div>
<div class="box" style="top:356px;width:55px;background:#18d2d6;color:#1c1c1c;">54.6848</div>
<div class="box" style="top:373px;width:55px;background:#9a66d4;color:#ffffff;-webkit-text-stroke:0.5px currentColor;">40.3304</div>
<div class="box" style="top:404px;width:61px;background:#a6a6a6;color:#2a2a2a;">−14.3544</div>
<div class="box" style="top:564px;width:55px;background:#ffffff;color:#202020;">50.5376</div>
<div class="tm" style="left:107.5px">4月</div>
<div class="tm" style="left:262.5px">5月</div>
<div class="tm" style="left:410.5px">6月</div>
<div class="tm" style="left:550.5px">7月</div>
<div class="tm" style="left:631.5px">16</div>
<div class="tm" style="left:720.5px">8月</div>
<div class="tm" style="left:875.5px">9月</div>
<div class="t" style="left:890px;top:628.7px;font-size:31px;line-height:34px;letter-spacing:1.6px;color:#dfe9f7;">FX678</div>
</div></body></html>
